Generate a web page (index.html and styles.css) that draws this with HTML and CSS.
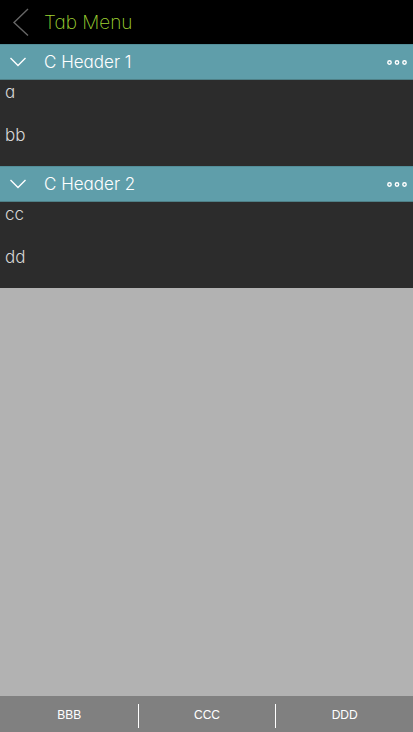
FILE: index.html
```html
<!DOCTYPE html>
<html lang="en">
<head>
<meta charset="utf-8">
<meta name="viewport" content="width=device-width, initial-scale=1">
<title>Tab Menu</title>
<link rel="stylesheet" href="styles.css">
</head>
<body>
<header class="topbar">
  <button class="icon-button back" type="button" aria-label="Back">
    <svg width="16" height="28" viewBox="0 0 16 28"><path d="M15 1 1 14.500 15 27.500"/></svg>
  </button>
  <h1 class="title">Tab Menu</h1>
</header>
<main class="content">
  <section class="group">
    <div class="group-header">
      <button class="icon-button toggle" type="button" aria-label="Collapse C Header 1">
        <svg width="16" height="10" viewBox="0 0 16 10"><path d="M.5 1 8 8.500 15.500 1"/></svg>
      </button>
      <h2 class="group-title">C Header 1</h2>
      <button class="icon-button more" type="button" aria-label="More for C Header 1">
        <svg width="20" height="6" viewBox="0 0 20 6"><circle cx="2.500" cy="3.500" r="1.700"/><circle cx="10" cy="3.500" r="1.700"/><circle cx="17.500" cy="3.500" r="1.700"/></svg>
      </button>
    </div>
    <ul class="items">
      <li class="item">a</li>
      <li class="item">bb</li>
    </ul>
  </section>
  <section class="group">
    <div class="group-header">
      <button class="icon-button toggle" type="button" aria-label="Collapse C Header 2">
        <svg width="16" height="10" viewBox="0 0 16 10"><path d="M.5 1 8 8.500 15.500 1"/></svg>
      </button>
      <h2 class="group-title">C Header 2</h2>
      <button class="icon-button more" type="button" aria-label="More for C Header 2">
        <svg width="20" height="6" viewBox="0 0 20 6"><circle cx="2.500" cy="3.500" r="1.700"/><circle cx="10" cy="3.500" r="1.700"/><circle cx="17.500" cy="3.500" r="1.700"/></svg>
      </button>
    </div>
    <ul class="items">
      <li class="item">cc</li>
      <li class="item">dd</li>
    </ul>
  </section>
</main>
<nav class="tabs">
  <button class="tab" type="button">BBB</button>
  <button class="tab" type="button">CCC</button>
  <button class="tab" type="button">DDD</button>
</nav>
</body>
</html>
```
FILE: styles.css
```css
* {
  box-sizing: border-box;
}

body {
  margin: 0;
  min-height: 100vh;
  display: flex;
  flex-direction: column;
  background: #b2b2b2;
  font-family: Inter, "Liberation Sans", sans-serif;
  font-feature-settings: "cv11";
  font-weight: 300;
}

h1,
h2,
ul {
  margin: 0;
  padding: 0;
  font-weight: inherit;
}

button {
  border: 0;
  padding: 0;
  background: none;
  color: inherit;
}

svg {
  display: block;
  overflow: visible;
  fill: none;
  stroke: currentColor;
  stroke-width: 1.4;
}

.icon-button {
  display: flex;
  align-items: center;
  align-self: stretch;
}

.topbar {
  display: flex;
  align-items: center;
  height: 44px;
  background: #000;
}

.back {
  width: 44px;
  padding-left: 13px;
  color: #666;
}

.title {
  padding-top: 2px;
  color: #9ed232;
  font-size: 19px;
  font-weight: 200;
  line-height: 24px;
}

.content {
  flex: 1;
}

.group-header {
  display: flex;
  align-items: center;
  height: 36px;
  border-top: 1px solid #538e99;
  border-bottom: 1px solid #4f8087;
  background: #5f9eaa;
  color: #fff;
}

.toggle {
  width: 44px;
  padding-left: 10px;
}

.group-title {
  flex: 1;
  font-size: 17px;
  line-height: 24px;
}

.more {
  padding-right: 6px;
}

.items {
  list-style: none;
  background: #2c2c2c;
  color: #d6d6d6;
}

.item {
  height: 43px;
  padding: 0 5px;
  font-size: 17px;
  line-height: 24px;
}

.tabs {
  display: flex;
  align-items: center;
  height: 36px;
  padding-top: 3px;
  padding-left: 1px;
  background: #808080;
  color: #fff;
}

.tab {
  flex: 1;
  height: 24px;
  padding-bottom: 2px;
  font-family: "Liberation Sans", Arial, sans-serif;
  font-size: 12px;
}

.tab + .tab {
  border-left: 1px solid #fff;
}
```
